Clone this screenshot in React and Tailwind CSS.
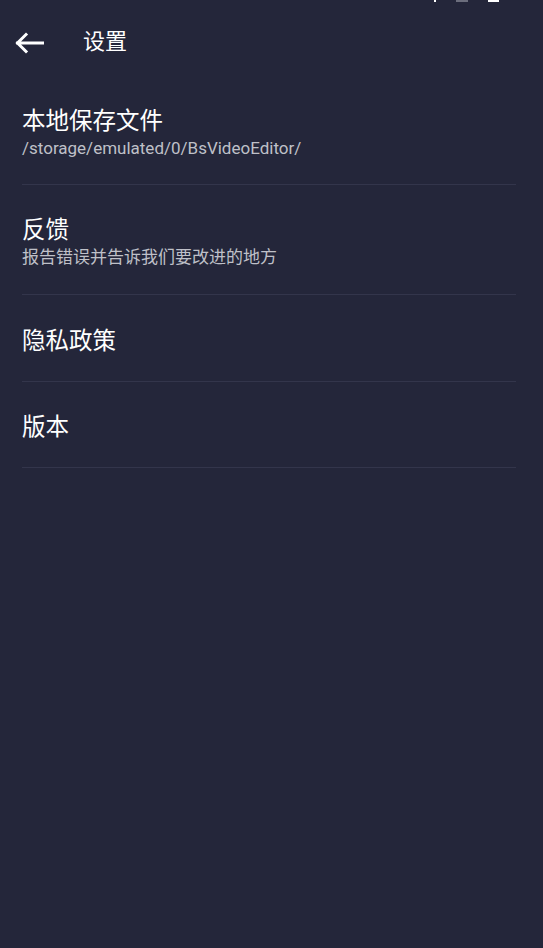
import React from 'react';

const items = [
  { title: '本地保存文件', sub: '/storage/emulated/0/BsVideoEditor/', pad: 'pt-[23px] pb-[26px]' },
  { title: '反馈', sub: '报告错误并告诉我们要改进的地方', pad: 'pt-[31px] pb-[27px]' },
  { title: '隐私政策', pad: 'pt-[32px] pb-[26px]' },
  { title: '版本', pad: 'pt-[31px] pb-[26px]' },
];

const App = () => {
  return (
    <div
      className="min-h-[948px] w-full bg-[#24263a] text-white"
      style={{ fontFamily: 'Roboto, "Noto Sans CJK SC", sans-serif' }}
    >
      {/* status bar, mostly cut off */}
      <div className="h-[2px] flex items-start pl-[434px] gap-[20px]">
        <div className="w-[2px] h-[2px] bg-white" />
        <div className="w-[12px] h-[2px] bg-[#6b6d7c]" />
        <div className="w-[11px] h-[2px] bg-white" />
      </div>

      <header className="h-[82px] flex items-center">
        <button className="ml-[14px] w-[30px] h-[30px] flex items-center justify-center">
          <svg width="30" height="22" viewBox="0 0 30 22" fill="none">
            <path d="M29 11H3.5M12 2.5L3.5 11L12 19.5" stroke="#fff" strokeWidth="3" strokeLinecap="square" />
          </svg>
        </button>
        <h1 className="ml-[39px] -mt-[2px] text-[22px] leading-[28px] text-white">设置</h1>
      </header>

      <div className="pl-[22px] pr-[27px]">
        {items.map((it) => (
          <div key={it.title} className={`${it.pad} border-b border-[#33354b]`}>
            <div className="text-[23.5px] leading-[28px] text-white">{it.title}</div>
            {it.sub && (
              <div className="mt-[3px] text-[17px] leading-[20px] text-[#bfc0c8]">{it.sub}</div>
            )}
          </div>
        ))}
      </div>
    </div>
  );
};

export default App;
